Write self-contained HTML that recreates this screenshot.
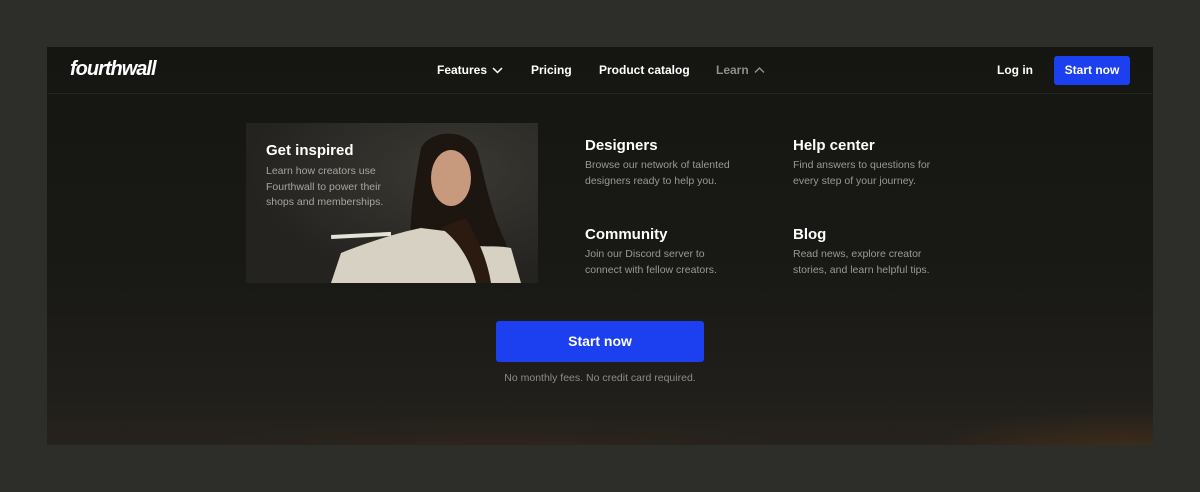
<!DOCTYPE html>
<html><head><meta charset="utf-8"><style>
*{margin:0;padding:0;box-sizing:border-box}
body{width:1200px;height:492px;background:#2d2e29;font-family:"Liberation Sans",sans-serif;position:relative;overflow:hidden}
.panel{position:absolute;left:47px;top:47px;width:1106px;height:398px;background:linear-gradient(180deg,#151512 0%,#191915 60%,#211f1b 88%,#26221d 100%);overflow:hidden}
.glow{position:absolute;left:0;right:0;bottom:0;height:70px;background:radial-gradient(ellipse 200px 40px at 1080px 75px,rgba(120,70,20,.3),transparent),radial-gradient(ellipse 300px 40px at 450px 80px,rgba(90,50,30,.18),transparent)}
.nav{position:absolute;left:0;top:0;width:100%;height:47px;border-bottom:1px solid #26261f}
.logo{position:absolute;left:23px;top:11px;color:#fff;font-weight:bold;font-style:italic;font-size:20px;letter-spacing:-1px}
.nl{position:absolute;top:16px;color:#fff;font-weight:bold;font-size:12px;white-space:nowrap}
.btn{position:absolute;background:#1c40f0;color:#fff;font-weight:bold;border-radius:3px;text-align:center}
.card{position:absolute;left:199px;top:76px;width:292px;height:160px;background:radial-gradient(ellipse at 70% 30%,#3b3934,#24231f 70%);overflow:hidden}
h3{position:absolute;color:#fff;font-size:15px;font-weight:bold}
p.d{position:absolute;color:#9a9a93;font-size:10.5px;line-height:15.5px}
</style></head><body>
<div class="panel">
<div class="glow"></div>
<div class="nav">
<div class="logo">fourthwall</div>
<div class="nl" style="left:390px">Features <svg width="11" height="8" viewBox="0 0 11 8" style="margin-left:2px"><path d="M1 2l4.5 4.5L10 2" stroke="#fff" stroke-width="1.5" fill="none"/></svg></div>
<div class="nl" style="left:484px">Pricing</div>
<div class="nl" style="left:552px">Product catalog</div>
<div class="nl" style="left:669px;color:#8e8e88">Learn <svg width="11" height="8" viewBox="0 0 11 8" style="margin-left:2px"><path d="M1 6.5L5.5 2 10 6.5" stroke="#8e8e88" stroke-width="1.5" fill="none"/></svg></div>
<div class="nl" style="left:950px">Log in</div>
<div class="btn" style="left:1007px;top:9px;width:76px;height:29px;line-height:29px;font-size:12px">Start now</div>
</div>
<div class="card">
<svg width="292" height="160" style="position:absolute;left:0;top:0">
<path d="M175 25 C185 5 225 5 232 30 C240 60 245 90 260 120 L265 160 L170 160 C160 120 165 80 175 25Z" fill="#1d150f"/>
<ellipse cx="205" cy="55" rx="20" ry="28" fill="#c79a7d"/>
<path d="M85 160 L95 130 C120 120 150 110 175 105 L215 110 C225 130 240 120 265 125 L275 160Z" fill="#d6d1c2"/>
<path d="M195 105 C215 120 225 140 230 160 L245 160 C240 130 228 110 220 95Z" fill="#2a1a10"/>
<rect x="85" y="112" width="60" height="4" fill="#e5e2d8" transform="rotate(-3 85 112)"/>
</svg>
<h3 style="left:20px;top:19px">Get inspired</h3>
<p class="d" style="left:20px;top:41px;color:#a6a59f">Learn how creators use<br>Fourthwall to power their<br>shops and memberships.</p>
</div>
<h3 style="left:538px;top:90px">Designers</h3>
<p class="d" style="left:538px;top:111px">Browse our network of talented<br>designers ready to help you.</p>
<h3 style="left:746px;top:90px">Help center</h3>
<p class="d" style="left:746px;top:111px">Find answers to questions for<br>every step of your journey.</p>
<h3 style="left:538px;top:179px">Community</h3>
<p class="d" style="left:538px;top:200px">Join our Discord server to<br>connect with fellow creators.</p>
<h3 style="left:746px;top:179px">Blog</h3>
<p class="d" style="left:746px;top:200px">Read news, explore creator<br>stories, and learn helpful tips.</p>
<div class="btn" style="left:449px;top:274px;width:208px;height:41px;line-height:41px;font-size:14px">Start now</div>
<p class="d" style="left:0;width:1106px;text-align:center;top:324px;color:#8c8c86">No monthly fees. No credit card required.</p>
</div>
</body></html>
